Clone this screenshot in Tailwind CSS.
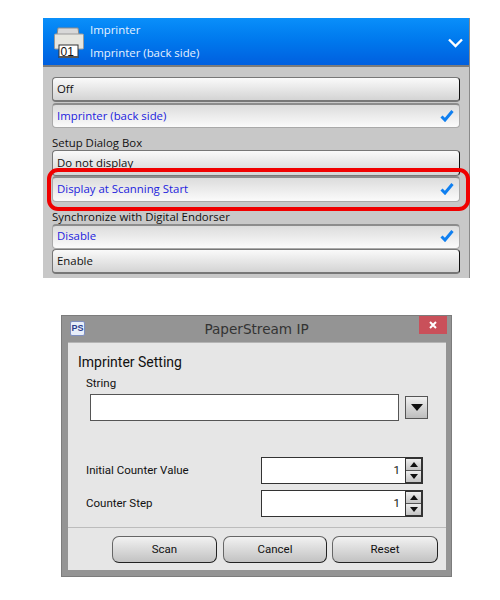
<!DOCTYPE html>
<html lang="en">
<head>
    <meta charset="UTF-8">
    <title>Imprinter</title>
    <script src="https://cdn.jsdelivr.net/npm/@tailwindcss/browser@4"></script>
</head>
<body class="bg-white">
<div class="relative w-[500px] h-[600px] pt-[18px] overflow-hidden font-['Open_Sans',sans-serif] text-[11.4px] text-[#111]">

    <!-- Imprinter panel -->
    <div class="ml-[43px] w-[427px] h-[260px] bg-[#c8c8c8] border-r border-[#8a8a8a]">
        <div class="relative flex h-[49px] pl-[11px] bg-gradient-to-b from-[#0a8ffa] to-[#005fdf] border-b-2 border-[#7b7b7b] text-[#e6f2ff]">
            <svg class="mt-[9px] w-[30px] h-[31px]" viewBox="0 0 30 31">
                <path d="M4 1h20l1 7H3z" fill="#d8d8d8" stroke="#8b8b8b"/>
                <rect x="0.5" y="7" width="29" height="15" rx="1" fill="#e6e6e0" stroke="#9a9a9a"/>
                <rect x="5" y="18" width="19" height="13" fill="#fff" stroke="#333"/>
                <rect x="5" y="29" width="19" height="2" fill="#555"/>
                <text x="6.5" y="28.5" font-size="12" font-family="Liberation Sans" fill="#111">01</text>
            </svg>
            <div class="ml-[6px] flex flex-col">
                <span class="mt-[4px] leading-[16px]">Imprinter</span>
                <span class="mt-[7px] leading-[16px]">Imprinter (back side)</span>
            </div>
            <svg class="absolute right-[6px] top-[20px] w-[15px] h-[10px]" viewBox="0 0 15 10" fill="none" stroke="#fff" stroke-width="2.4"><path d="M1 1.5l6.5 6.5L14 1.5"/></svg>
        </div>

        <div class="pl-[9px] w-[417px] pt-[10px]">
            <div class="flex items-center h-[25px] pl-[4px] rounded-[4px] border border-[#777] border-r-[#111] border-b-2 bg-gradient-to-b from-[#fafafa] to-[#d4d4d4]">Off</div>
            <div class="flex items-center justify-between mt-[1px] h-[25px] pl-[4px] pr-[5px] rounded-[4px] border border-[#aaa] border-t-2 border-t-[#8c8c8c] bg-gradient-to-b from-[#dcdcdc] to-[#fbfbfb] text-[#2222dd]">
                <span>Imprinter (back side)</span>
                <svg class="w-[14px] h-[12px]" viewBox="0 0 14 12" fill="none" stroke="#0f7ff0" stroke-width="3"><path d="M1.5 6.5l3.5 3.5L12.5 1"/></svg>
            </div>
            <p class="mt-[7px] h-[15px] leading-[15px]">Setup Dialog Box</p>
            <div class="flex items-center h-[26px] pl-[4px] rounded-[4px] border border-[#777] border-r-[#111] bg-gradient-to-b from-[#fafafa] to-[#d4d4d4]">Do not display</div>
            <div class="flex items-center justify-between h-[26px] pb-[2px] pl-[4px] pr-[5px] rounded-[4px] border border-[#aaa] border-t-2 border-t-[#8c8c8c] bg-gradient-to-b from-[#dcdcdc] to-[#fbfbfb] text-[#2222dd]">
                <span>Display at Scanning Start</span>
                <svg class="w-[14px] h-[12px]" viewBox="0 0 14 12" fill="none" stroke="#0f7ff0" stroke-width="3"><path d="M1.5 6.5l3.5 3.5L12.5 1"/></svg>
            </div>
            <p class="mt-[7px] h-[15px] leading-[15px]">Synchronize with Digital Endorser</p>
            <div class="flex items-center justify-between h-[25px] pb-[3px] pl-[4px] pr-[5px] rounded-[4px] border border-[#aaa] border-t-2 border-t-[#8c8c8c] bg-gradient-to-b from-[#dcdcdc] to-[#fbfbfb] text-[#2222dd]">
                <span>Disable</span>
                <svg class="w-[14px] h-[12px]" viewBox="0 0 14 12" fill="none" stroke="#0f7ff0" stroke-width="3"><path d="M1.5 6.5l3.5 3.5L12.5 1"/></svg>
            </div>
            <div class="flex items-center h-[25px] pl-[4px] rounded-[4px] border border-[#777] border-r-[#111] border-b-2 bg-gradient-to-b from-[#fafafa] to-[#d4d4d4]">Enable</div>
        </div>
    </div>

    <!-- red highlight -->
    <div class="absolute left-[47px] top-[168px] w-[423px] h-[43px] rounded-[11px] border-4 border-[#f00000]"></div>

    <!-- PaperStream IP dialog -->
    <div class="ml-[61px] mt-[37px] w-[391px] h-[262px] bg-[#949494] border border-[#7c7c7c] flex flex-col font-['Roboto',sans-serif] text-[11.5px]">
        <div class="relative flex items-center justify-center h-[26px] shrink-0 font-['DejaVu_Sans',sans-serif] text-[13.6px] text-[#333]">
            <span class="absolute left-[8px] top-[5px] w-[15px] h-[15px] flex items-center justify-center bg-[#e8eefa] border border-[#7f8fc0] rounded-[2px] font-['Liberation_Sans'] font-bold text-[9px] text-[#2c3f8f]">PS</span>
            <span>PaperStream IP</span>
            <span class="absolute right-[4px] top-0 w-[28px] h-[18px] flex items-center justify-center bg-[#c9505a]">
                <svg class="w-[8px] h-[8px]" viewBox="0 0 8 8" stroke="#fff" stroke-width="2"><path d="M1 1l6 6M7 1L1 7"/></svg>
            </span>
        </div>
        <div class="ml-[6px] w-[378px] h-[228px] bg-[#e6e6e6] border-t border-[#b5b5b5] flex flex-col">
            <div class="flex-1 pl-[10px]">
                <p class="mt-[10px] text-[14px] leading-[18px]">Imprinter Setting</p>
                <p class="mt-[4px] ml-[8px] leading-[16px]">String</p>
                <div class="flex mt-[3px] ml-[12px]">
                    <div class="w-[309px] h-[27px] bg-white border border-[#555]"></div>
                    <div class="ml-[6px] mt-[2px] w-[23px] h-[23px] flex items-center justify-center border border-[#555] bg-gradient-to-b from-[#f0f0f0] to-[#bdbdbd]">
                        <svg class="w-[12px] h-[7px]" viewBox="0 0 12 7"><path d="M0 0h12L6 7z" fill="#111"/></svg>
                    </div>
                </div>
                <div class="flex items-center mt-[36px] ml-[8px] h-[27px]">
                    <span class="w-[175px] pt-[1px]">Initial Counter Value</span>
                    <div class="w-[145px] h-[27px] flex items-center justify-end pr-[5px] bg-white border border-[#333]">1</div>
                    <div class="w-[17px] h-[27px] flex flex-col border-2 border-[#333] border-l-0">
                        <div class="flex-1 flex items-center justify-center bg-gradient-to-b from-[#eee] to-[#c4c4c4] border-b border-[#555]"><svg class="w-[8px] h-[5px]" viewBox="0 0 8 5"><path d="M4 0l4 5H0z" fill="#111"/></svg></div>
                        <div class="flex-1 flex items-center justify-center bg-gradient-to-b from-[#eee] to-[#c4c4c4]"><svg class="w-[8px] h-[5px]" viewBox="0 0 8 5"><path d="M0 0h8L4 5z" fill="#111"/></svg></div>
                    </div>
                </div>
                <div class="flex items-center mt-[6px] ml-[8px] h-[27px]">
                    <span class="w-[175px]">Counter Step</span>
                    <div class="w-[145px] h-[27px] flex items-center justify-end pr-[5px] bg-white border border-[#333]">1</div>
                    <div class="w-[17px] h-[27px] flex flex-col border-2 border-[#333] border-l-0">
                        <div class="flex-1 flex items-center justify-center bg-gradient-to-b from-[#eee] to-[#c4c4c4] border-b border-[#555]"><svg class="w-[8px] h-[5px]" viewBox="0 0 8 5"><path d="M4 0l4 5H0z" fill="#111"/></svg></div>
                        <div class="flex-1 flex items-center justify-center bg-gradient-to-b from-[#eee] to-[#c4c4c4]"><svg class="w-[8px] h-[5px]" viewBox="0 0 8 5"><path d="M0 0h8L4 5z" fill="#111"/></svg></div>
                    </div>
                </div>
            </div>
            <div class="h-[43px] border-t border-[#bcbcbc] flex pl-[44px] pt-[8px]">
                <div class="w-[105px] h-[27px] flex items-center justify-center rounded-[7px] border border-[#666] border-r-[#222] border-b-[#222] bg-gradient-to-b from-[#f2f2f2] to-[#c2c2c2]">Scan</div>
                <div class="ml-[6px] w-[104px] h-[27px] flex items-center justify-center rounded-[7px] border border-[#666] border-r-[#222] border-b-[#222] bg-gradient-to-b from-[#f2f2f2] to-[#c2c2c2]">Cancel</div>
                <div class="ml-[5px] w-[106px] h-[27px] flex items-center justify-center rounded-[7px] border border-[#666] border-r-[#222] border-b-[#222] bg-gradient-to-b from-[#f2f2f2] to-[#c2c2c2]">Reset</div>
            </div>
        </div>
    </div>
</div>
</body>
</html>
